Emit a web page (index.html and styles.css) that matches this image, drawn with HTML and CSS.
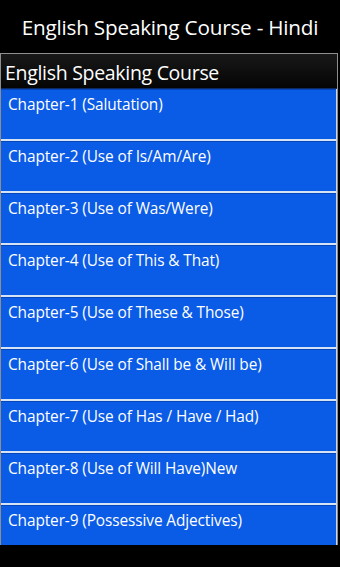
FILE: index.html
```html
<!DOCTYPE html>
<html>
<head>
<meta charset="utf-8">
<link rel="stylesheet" href="styles.css">
</head>
<body>
<div class="app">
  <div class="titlebar">English Speaking Course - Hindi</div>
  <div class="panel">
    <div class="panel-head">English Speaking Course</div>
    <ul class="list">
      <li class="item">Chapter-1 (Salutation)</li>
      <li class="item">Chapter-2 (Use of Is/Am/Are)</li>
      <li class="item">Chapter-3 (Use of Was/Were)</li>
      <li class="item">Chapter-4 (Use of This &amp; That)</li>
      <li class="item">Chapter-5 (Use of These &amp; Those)</li>
      <li class="item">Chapter-6 (Use of Shall be &amp; Will be)</li>
      <li class="item">Chapter-7 (Use of Has / Have / Had)</li>
      <li class="item">Chapter-8 (Use of Will Have)New</li>
      <li class="item">Chapter-9 (Possessive Adjectives)</li>
    </ul>
  </div>
  <div class="bottombar"></div>
</div>
</body>
</html>
```

FILE: styles.css
```css
html, body {
  margin: 0;
  padding: 0;
  background: #000;
}
body {
  font-family: "Open Sans", "Noto Sans", sans-serif;
  color: #fff;
}
.app {
  width: 340px;
  height: 567px;
  display: flex;
  flex-direction: column;
  overflow: hidden;
  background: #000;
}
.titlebar {
  height: 53px;
  flex: none;
  display: flex;
  align-items: center;
  justify-content: center;
  font-size: 20.7px;
  letter-spacing: -0.2px;
  padding-top: 1px;
  box-sizing: border-box;
}
.panel {
  flex: 1;
  margin-right: 2px;
  border: 1px solid #8e8e8e;
  border-bottom: none;
  overflow: hidden;
  display: flex;
  flex-direction: column;
  min-height: 0;
}
.panel-head {
  height: 35px;
  flex: none;
  background: linear-gradient(#181818, #050505);
  font-size: 19.5px;
  letter-spacing: -0.3px;
  padding-left: 4px;
  display: flex;
  align-items: center;
  padding-top: 2px;
  box-sizing: border-box;
  border-bottom: 1px solid #0b2a66;
}
.list {
  list-style: none;
  margin: 0;
  padding: 0;
  flex: 1;
  overflow: hidden;
}
.item {
  height: 52px;
  box-sizing: border-box;
  background: #0a5be6;
  border-bottom: 2px solid #d4e4f6;
  border-right: 1px solid #c9d6ec;
  box-shadow: inset 0 1px 0 #0646b8;
  padding: 6px 0 0 7px;
  font-size: 15.4px;
  letter-spacing: -0.1px;
  line-height: 20px;
}
.bottombar {
  height: 22px;
  flex: none;
  background: #000;
}
```
